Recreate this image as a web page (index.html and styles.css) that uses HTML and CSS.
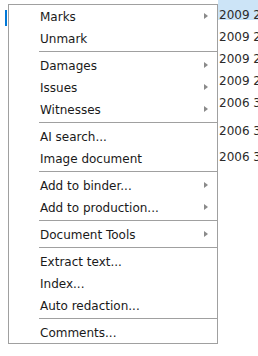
FILE: index.html
```html
<!DOCTYPE html>
<html>
<head>
<meta charset="utf-8">
<link rel="stylesheet" href="styles.css">
</head>
<body>
<div class="grid">
  <div class="row selected"><span class="name"></span><span class="date">2009 2</span></div>
  <div class="row"><span class="name"></span><span class="date">2009 2</span></div>
  <div class="row"><span class="name"></span><span class="date">2009 2</span></div>
  <div class="row"><span class="name"></span><span class="date">2009 2</span></div>
  <div class="row"><span class="name"></span><span class="date">2006 3</span></div>
  <div class="row tall"><span class="name"></span><span class="date">2006 3</span></div>
  <div class="row mid"><span class="name"></span><span class="date">2006 3</span></div>
</div>

<div class="menu">
  <div class="item sub">Marks</div>
  <div class="item">Unmark</div>
  <div class="sep"></div>
  <div class="item sub">Damages</div>
  <div class="item sub">Issues</div>
  <div class="item sub">Witnesses</div>
  <div class="sep"></div>
  <div class="item">AI search...</div>
  <div class="item">Image document</div>
  <div class="sep"></div>
  <div class="item sub">Add to binder...</div>
  <div class="item sub">Add to production...</div>
  <div class="sep"></div>
  <div class="item sub">Document Tools</div>
  <div class="sep"></div>
  <div class="item">Extract text...</div>
  <div class="item">Index...</div>
  <div class="item">Auto redaction...</div>
  <div class="sep"></div>
  <div class="item">Comments...</div>
</div>
</body>
</html>
```

FILE: styles.css
```css
html, body {
  margin: 0;
  padding: 0;
  background: #ffffff;
  overflow: hidden;
}
body {
  width: 258px;
  height: 356px;
  position: relative;
  font-family: "DejaVu Sans", Verdana, sans-serif;
  font-size: 12px;
}
.grid {
  margin-top: -2px;
  display: flex;
  flex-direction: column;
}
.row {
  height: 22px;
  display: flex;
  align-items: flex-end;
  box-sizing: border-box;
  white-space: nowrap;
  color: #2b2b2b;
}
.row.tall { height: 28px; }
.row.mid { height: 26px; }
.row .name {
  width: 219px;
  flex: none;
  align-self: stretch;
}
.row .date {
  line-height: 14px;
  margin-bottom: -2px;
}
.row.selected {
  background: linear-gradient(to right, transparent 218px, #cce4f7 218px);
}
.row.selected .name {
  border-left: 2px solid #0078d7;
  margin-left: 5px;
  width: 212px;
  margin-top: 12px;
  margin-bottom: -6px;
}
.menu {
  position: absolute;
  left: 8px;
  top: 4px;
  width: 208px;
  background: #ffffff;
  border: 1px solid #a0a0a0;
  color: #1a1a1a;
}
.item {
  height: 22px;
  box-sizing: border-box;
  padding-top: 2px;
  line-height: 20px;
  padding-left: 31px;
  position: relative;
  white-space: nowrap;
}
.item.sub::after {
  content: "";
  position: absolute;
  right: 9px;
  top: 8px;
  width: 0;
  height: 0;
  border-top: 3.5px solid transparent;
  border-bottom: 3.5px solid transparent;
  border-left: 4px solid #8a8a8a;
}
.sep {
  height: 1px;
  margin: 2px 0 2px 30px;
  background: #a0a0a0;
}
```
